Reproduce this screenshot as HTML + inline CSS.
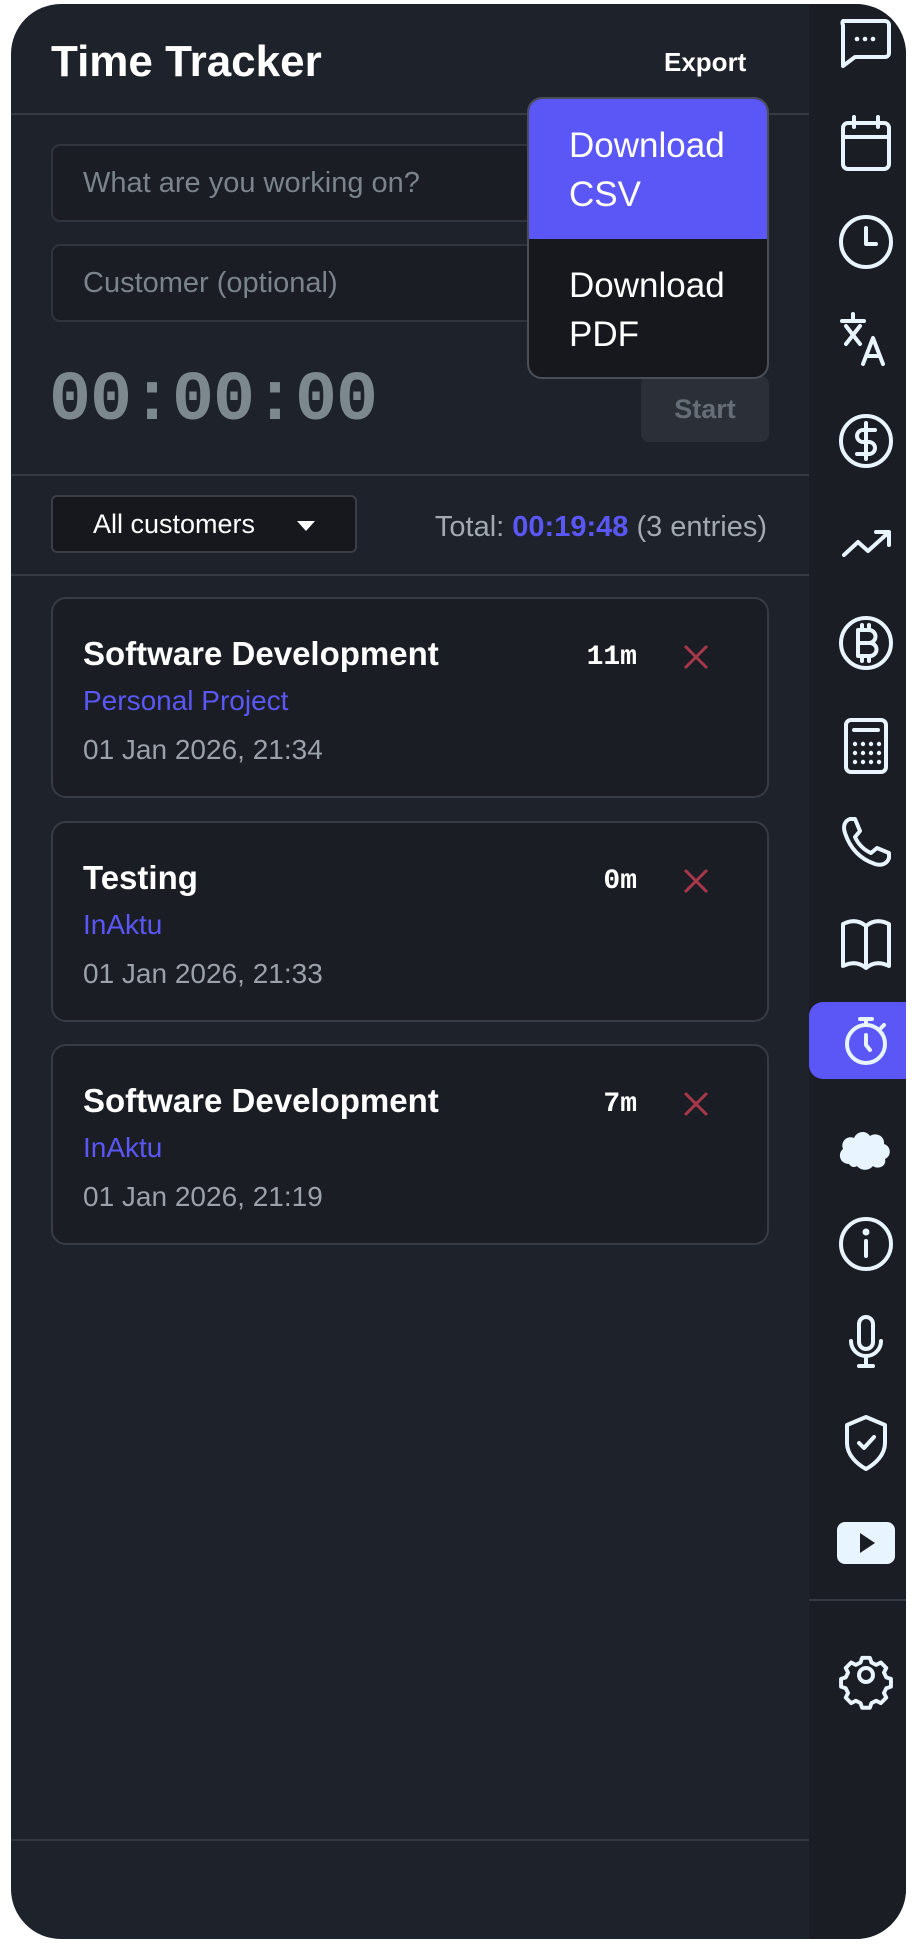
<!DOCTYPE html>
<html><head><meta charset="utf-8"><style>
*{box-sizing:border-box;margin:0;padding:0}
body{width:920px;height:1954px;background:#fff;font-family:"Liberation Sans",sans-serif;position:relative;overflow:hidden}
.app{position:absolute;left:11px;top:4px;width:895px;height:1935px;border-radius:50px;background:#1e222a;overflow:hidden}
.side{position:absolute;left:798px;top:0;width:97px;height:100%;background:#1a1d23}
.abs{position:absolute}
.hr{position:absolute;left:0;width:798px;height:2px;background:#353941}
.inp{position:absolute;left:40px;width:718px;height:78px;border:2px solid #30343c;border-radius:9px;background:#1a1d23;color:#7b838b;font-size:29px;padding:0 0 0 30px;line-height:74px}
.card{position:absolute;left:40px;width:718px;height:201px;border:2px solid #373b43;border-radius:15px;background:#1a1d23}
.t{position:absolute;left:30px;top:36px;color:#fff;font-size:33px;font-weight:bold}
.s{position:absolute;left:30px;top:86px;color:#5b57f7;font-size:28px}
.d{position:absolute;left:30px;top:135px;color:#9ba1a8;font-size:28px}
.du{position:absolute;right:130px;top:43px;color:#fff;font-family:"Liberation Mono",monospace;font-weight:bold;font-size:28px}
.x{position:absolute;left:630px;top:45px}
</style></head><body>
<div class="app">
<div class="side">
<div class="abs" style="left:0;top:998px;width:97px;height:77px;background:#5b57f7;border-radius:14px 0 0 14px"></div>
<div class="abs" style="left:0;top:1595px;width:97px;height:2px;background:#353941"></div>
<svg class="abs" style="left:0;top:2px" width="98" height="1935" viewBox="0 0 98 1935" fill="none" stroke="#e8f4ff" stroke-width="4" stroke-linecap="round" stroke-linejoin="round">
<path d="M34 15h42a4 4 0 0 1 4 4v28a4 4 0 0 1-4 4H46l-12 9V19a4 4 0 0 1 0-4z"/>
<g fill="#e8f4ff" stroke="none"><circle cx="48" cy="33" r="2.3"/><circle cx="56" cy="33" r="2.3"/><circle cx="64" cy="33" r="2.3"/></g>
<rect x="34" y="117" width="46" height="46" rx="5"/><path d="M34 131h46M45 111v10M69 111v10"/>
<circle cx="57" cy="236" r="25"/><path d="M57 222v16h10"/>
<path d="M33 315h22M44 308v7M37 320l14 18M51 320l-14 18M54 358l10-26 10 26M58 350h13"/>
<circle cx="57" cy="435" r="25"/><path d="M66 424h-12a6 6 0 0 0 0 12h6a6 6 0 0 1 0 12h-12M57 417v36"/>
<path d="M35 549l14-13 10 9 20-18M67 526h13v13"/>
<circle cx="57" cy="637" r="25"/><path d="M49 624h11a6 6 0 0 1 0 13h-11zM49 637h12a6 6 0 0 1 0 13h-12zM49 624v26M53 619v5M60 619v5M53 650v5M60 650v5"/>
<rect x="37" y="714" width="40" height="52" rx="5"/><path d="M45 724h24"/>
<g fill="#e8f4ff" stroke="none"><circle cx="46" cy="738" r="2.2"/><circle cx="54" cy="738" r="2.2"/><circle cx="62" cy="738" r="2.2"/><circle cx="70" cy="738" r="2.2"/><circle cx="46" cy="747" r="2.2"/><circle cx="54" cy="747" r="2.2"/><circle cx="62" cy="747" r="2.2"/><circle cx="70" cy="747" r="2.2"/><circle cx="46" cy="756" r="2.2"/><circle cx="54" cy="756" r="2.2"/><circle cx="62" cy="756" r="2.2"/><circle cx="70" cy="756" r="2.2"/></g>
<path d="M41 813c-6 2-7 8-5 14 5 15 15 26 30 31 6 2 12 0 14-6l0-5-12-5-6 5c-7-3-13-9-16-16l5-6-5-12z"/>
<path d="M34 918v42c8-4 16-4 23 2 7-6 15-6 23-2v-42c-8-4-16-4-23 2-7-6-15-6-23-2zM57 920v40"/>
<circle cx="57" cy="1038" r="19"/><path d="M51 1013h12M57 1013v6M57 1029v10l4 5M72 1022l3-3"/>
<path fill="#e8f4ff" stroke="none" d="M40 1158c-9 0-12-10-6-15-3-7 4-14 11-11 3-7 12-8 16-2 6-4 15 0 14 8 7 2 8 12 1 15 2 7-7 11-12 7-4 5-12 5-16 0-3 2-6 1-8-2z"/>
<circle cx="57" cy="1238" r="25"/><path d="M57 1235v15"/><circle cx="57" cy="1226" r="1.5" fill="#e8f4ff"/>
<rect x="50" y="1311" width="14" height="32" rx="7"/><path d="M42 1335a15 15 0 0 0 30 0M57 1351v9M50 1360h14"/>
<path d="M57 1411l19 8v18c0 12-10 21-19 26-9-5-19-14-19-26v-18z"/><path d="M50 1437l5 5 10-11"/>
<rect x="28" y="1516" width="58" height="42" rx="8" fill="#e8f4ff" stroke="none"/><path d="M51 1527v20l15-10z" fill="#1a1d23" stroke="none"/>
<g transform="translate(57 1672)"><path d="M-5-22h10l2 6 6 3 6-3 7 7-3 6 3 6 6 2v10l-6 2-3 6 3 6-7 7-6-3-6 3-2 6h-10l-2-6-6-3-6 3-7-7 3-6-3-6-6-2v-10l6-2 3-6-3-6 7-7 6 3 6-3z" transform="translate(0 -3) scale(0.78)" stroke-width="5"/><circle r="7" cy="-3"/></g>
</svg>
</div>

<div class="abs" style="left:40px;top:33px;color:#fff;font-size:44px;font-weight:bold">Time Tracker</div>
<div class="abs" style="left:653px;top:43px;color:#fff;font-size:26px;font-weight:bold">Export</div>
<div class="hr" style="top:109px"></div>
<div class="inp" style="top:140px">What are you working on?</div>
<div class="inp" style="top:240px">Customer (optional)</div>
<div class="abs" style="left:38px;top:358px;color:#7d878e;font-family:'Liberation Mono',monospace;font-weight:bold;font-size:70px;letter-spacing:-1px">00:00:00</div>
<div class="abs" style="left:630px;top:372px;width:128px;height:66px;background:#2a2f38;border-radius:8px;color:#666d77;font-weight:bold;font-size:27px;text-align:center;line-height:66px">Start</div>
<div class="hr" style="top:470px"></div>
<div class="abs" style="left:40px;top:491px;width:306px;height:58px;background:#16181d;border:2px solid #3a3e46;border-radius:6px;color:#fff;font-size:27px;line-height:54px;padding-left:40px">All customers<span style="position:absolute;left:244px;top:24px;border-left:9px solid transparent;border-right:9px solid transparent;border-top:10px solid #fff"></span></div>
<div class="abs" style="right:139px;top:507px;color:#a3a9b0;font-size:29px">Total: <b style="color:#5b57f7">00:19:48</b> (3 entries)</div>
<div class="hr" style="top:570px"></div>

<div class="card" style="top:593px"><div class="t">Software Development</div><div class="s">Personal Project</div><div class="d">01 Jan 2026, 21:34</div><div class="du">11m</div><svg class="x" width="26" height="26" viewBox="0 0 26 26" stroke="#a8374b" stroke-width="3"><path d="M2 2l22 22M24 2L2 24"/></svg></div>
<div class="card" style="top:817px"><div class="t">Testing</div><div class="s">InAktu</div><div class="d">01 Jan 2026, 21:33</div><div class="du">0m</div><svg class="x" width="26" height="26" viewBox="0 0 26 26" stroke="#a8374b" stroke-width="3"><path d="M2 2l22 22M24 2L2 24"/></svg></div>
<div class="card" style="top:1040px"><div class="t">Software Development</div><div class="s">InAktu</div><div class="d">01 Jan 2026, 21:19</div><div class="du">7m</div><svg class="x" width="26" height="26" viewBox="0 0 26 26" stroke="#a8374b" stroke-width="3"><path d="M2 2l22 22M24 2L2 24"/></svg></div>

<div class="hr" style="top:1835px"></div>

<div class="abs" style="left:516px;top:93px;width:242px;height:282px;border:2px solid #4a4e56;border-radius:15px;overflow:hidden;background:#16181d">
<div style="height:140px;background:#5b57f7;color:#fff;font-size:35px;line-height:49px;padding:22px 0 0 40px">Download<br>CSV</div>
<div style="color:#fff;font-size:35px;line-height:49px;padding:22px 0 0 40px">Download<br>PDF</div>
</div>
</div>
</body></html>
